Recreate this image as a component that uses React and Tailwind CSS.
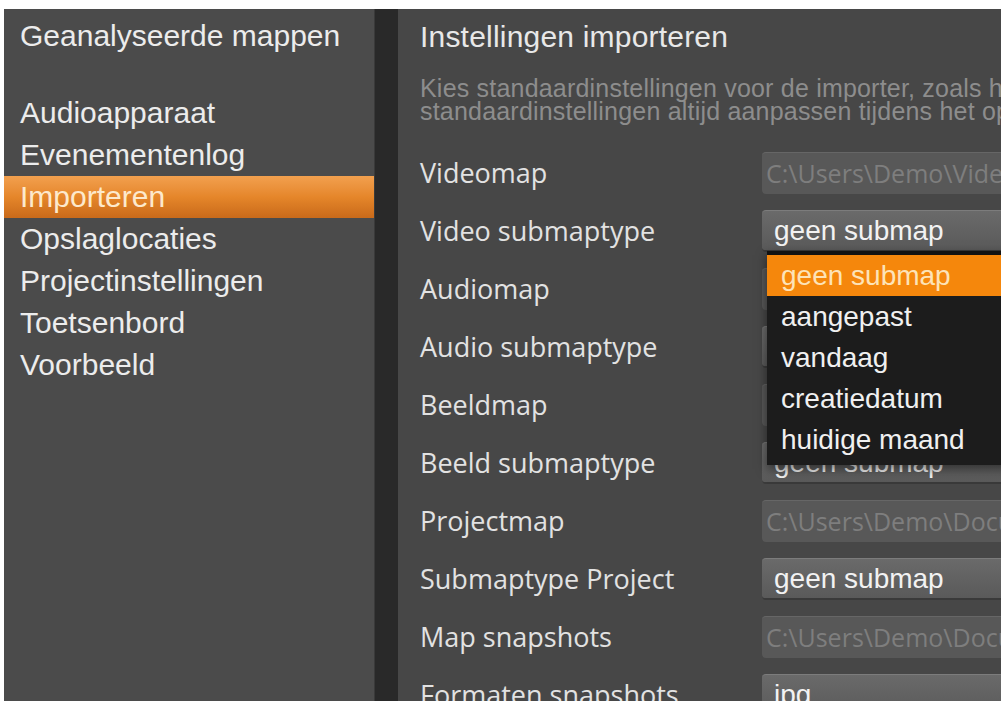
import React from "react";

const menuItems = [
  "Audioapparaat",
  "Evenementenlog",
  "Importeren",
  "Opslaglocaties",
  "Projectinstellingen",
  "Toetsenbord",
  "Voorbeeld",
];

const rows = [
  { label: "Videomap", kind: "path", value: "C:\\Users\\Demo\\Videos" },
  { label: "Video submaptype", kind: "select", value: "geen submap" },
  { label: "Audiomap", kind: "path", value: "C:\\Users\\Demo\\Music" },
  { label: "Audio submaptype", kind: "select", value: "geen submap" },
  { label: "Beeldmap", kind: "path", value: "C:\\Users\\Demo\\Pictures" },
  { label: "Beeld submaptype", kind: "select", value: "geen submap" },
  { label: "Projectmap", kind: "path", value: "C:\\Users\\Demo\\Documents" },
  { label: "Submaptype Project", kind: "select", value: "geen submap" },
  { label: "Map snapshots", kind: "path", value: "C:\\Users\\Demo\\Documents" },
  { label: "Formaten snapshots", kind: "select", value: "jpg" },
];

const options = ["geen submap", "aangepast", "vandaag", "creatiedatum", "huidige maand"];

const arial = "font-['Liberation_Sans',Arial,sans-serif]";
const segoe = "font-['Open_Sans','Noto_Sans',sans-serif]";

const Field = ({ kind, value }) => {
  if (kind === "path") {
    return (
      <div
        className={`flex h-[42px] w-[300px] shrink-0 items-center overflow-hidden whitespace-nowrap rounded-[4px] border-t border-[#666] bg-[#585858] pl-[4px] text-[25px] text-[#7e7e7e] ${segoe}`}
      >
        {value}
      </div>
    );
  }
  return (
    <div
      className={`flex h-[42px] w-[300px] shrink-0 items-center overflow-hidden whitespace-nowrap rounded-[4px] border-t border-[#7c7c7c] border-b-2 border-b-[#3a3a3a] bg-gradient-to-b from-[#6a6a6a] to-[#5a5a5a] pl-[12px] text-[28px] text-[#f2f2f2] ${arial}`}
    >
      {value}
    </div>
  );
};

export default function App() {
  return (
    <div className="h-[704px] w-[1006px] overflow-hidden bg-white pb-[3px] pl-[4px] pr-[5px] pt-[9px]">
      <div className="flex h-full">
        {/* left navigation */}
        <aside className={`w-[370px] shrink-0 bg-[#4b4b4b] pt-[6px] text-[#ececec] ${arial}`}>
          <div className="pl-[16px] text-[30px] leading-[42px]">Geanalyseerde mappen</div>
          <ul className="mt-[35px]">
            {menuItems.map((item) => (
              <li
                key={item}
                className={
                  item === "Importeren"
                    ? "h-[42px] bg-gradient-to-b from-[#f2a04e] via-[#e5862a] to-[#c96a1a] pl-[16px] text-[30px] leading-[42px] text-[#fde9cc]"
                    : "h-[42px] pl-[16px] text-[30px] leading-[42px]"
                }
              >
                {item}
              </li>
            ))}
          </ul>
        </aside>

        <div className="w-[24px] shrink-0 border-l border-[#3a3a3a] bg-[#292929]" />

        {/* settings */}
        <main className="relative flex-1 overflow-hidden bg-[#474747] pl-[22px] pt-[8px]">
          <h2
            className={`whitespace-nowrap text-[30px] leading-[40px] tracking-[0.2px] text-[#e8e8e8] ${arial}`}
          >
            Instellingen importeren
          </h2>
          <p
            className={`mt-[20px] whitespace-nowrap text-[25px] leading-[23px] tracking-[0.2px] text-[#8d8d8d] ${arial}`}
          >
            Kies standaardinstellingen voor de importer, zoals het doel en de submap. U kunt de
            <br />
            standaardinstellingen altijd aanpassen tijdens het openen van de importer.
          </p>

          <div className="mt-[21px]">
            {rows.map((row) => (
              <div key={row.label} className="flex h-[58px] items-center">
                <div
                  className={`w-[342px] shrink-0 whitespace-nowrap text-[27px] text-[#e2e2e2] ${segoe}`}
                >
                  {row.label}
                </div>
                <Field kind={row.kind} value={row.value} />
              </div>
            ))}
          </div>

          {/* open dropdown for Video submaptype */}
          <div
            className={`absolute left-[369px] top-[242px] w-[260px] border-t-4 border-[#121212] bg-[#1c1c1c] pb-[5px] shadow-[0_4px_10px_rgba(0,0,0,0.5)] ${arial}`}
          >
            {options.map((opt, i) => (
              <div
                key={opt}
                className={
                  i === 0
                    ? "h-[41px] bg-[#f5870c] pl-[14px] text-[28px] leading-[41px] text-[#fde3b8]"
                    : "h-[41px] pl-[14px] text-[28px] leading-[41px] text-[#f0f0f0]"
                }
              >
                {opt}
              </div>
            ))}
          </div>
        </main>
      </div>
    </div>
  );
}
